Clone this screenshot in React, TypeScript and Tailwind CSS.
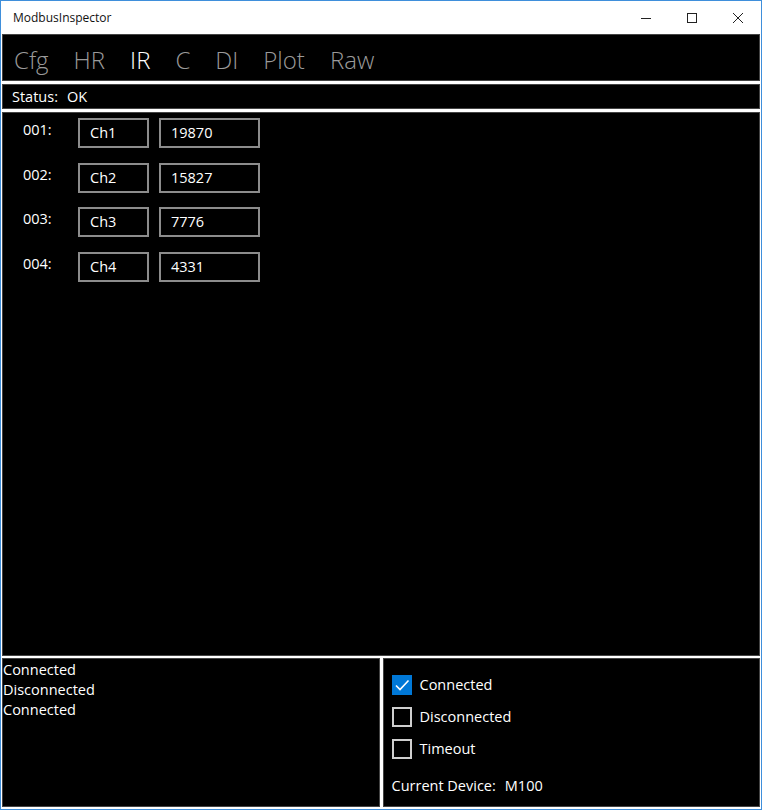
import React from "react";

const font = { fontFamily: '"Segoe UI", "Open Sans", "Noto Sans", sans-serif' };

function Box({ text, w }: { text: string; w: string }) {
  return (
    <div className={`${w} h-[30px] border-2 border-[#8c8c8c] flex items-center pl-[10px] text-[14.5px] text-white`}>
      {text}
    </div>
  );
}

function Check({ checked, label }: { checked?: boolean; label: string }) {
  return (
    <div className="flex items-center h-[20px]">
      {checked ? (
        <div className="w-[20px] h-[20px] bg-[#0078d7] flex items-center justify-center">
          <svg width="16" height="16" viewBox="0 0 16 16">
            <path d="M2 8.5 L6 12.5 L14.5 3.5" fill="none" stroke="white" strokeWidth="1.6" />
          </svg>
        </div>
      ) : (
        <div className="w-[20px] h-[20px] border-2 border-[#cfcfcf]" />
      )}
      <span className="ml-[8px] text-[14.5px] text-white">{label}</span>
    </div>
  );
}

export default function App() {
  const rows = [
    ["001:", "Ch1", "19870"],
    ["002:", "Ch2", "15827"],
    ["003:", "Ch3", "7776"],
    ["004:", "Ch4", "4331"],
  ];
  const tabs = ["Cfg", "HR", "IR", "C", "DI", "Plot", "Raw"];
  return (
    <div style={font} className="w-[762px] h-[810px] border border-[#3f8fdb] bg-white flex flex-col">
      {/* Title bar */}
      <div className="h-[33px] shrink-0 flex items-center justify-between">
        <span className="ml-[12px] text-[12px] text-[#111]">ModbusInspector</span>
        <div className="flex items-center h-full">
          <div className="w-[46px] h-full flex items-center justify-center">
            <svg width="12" height="12" viewBox="0 0 12 12"><path d="M1 6.5 H11" stroke="#222" strokeWidth="1" /></svg>
          </div>
          <div className="w-[46px] h-full flex items-center justify-center">
            <svg width="12" height="12" viewBox="0 0 12 12"><rect x="1.5" y="1.5" width="9" height="9" fill="none" stroke="#222" strokeWidth="1" /></svg>
          </div>
          <div className="w-[46px] h-full flex items-center justify-center">
            <svg width="12" height="12" viewBox="0 0 12 12"><path d="M1 1 L11 11 M11 1 L1 11" stroke="#222" strokeWidth="1" /></svg>
          </div>
        </div>
      </div>
      <div className="flex-1 flex flex-col px-[1px] pb-[2px]">
        {/* Nav */}
        <div className="h-[47px] shrink-0 bg-black border border-[#444] flex items-end pb-[3px] pl-[11px]">
          {tabs.map((t) => (
            <span
              key={t}
              className={`text-[24px] font-light mr-[25px] leading-[34px] ${t === "IR" ? "text-white" : "text-[#9a9a9a]"}`}
            >
              {t}
            </span>
          ))}
        </div>
        {/* Status */}
        <div className="h-[25px] mt-[3px] shrink-0 bg-black border border-[#444] flex items-center pt-[1px] pl-[9px] text-[14.5px] text-white">
          <span>Status:</span>
          <span className="ml-[9px]">OK</span>
        </div>
        {/* Main */}
        <div className="flex-1 mt-[3px] bg-black border border-[#444] pt-[5px] pl-[20px] flex flex-col gap-[14.5px]">
          {rows.map(([n, c, v]) => (
            <div key={n} className="flex items-start">
              <span className="w-[55px] text-[14.5px] text-white leading-[20px] pt-[2px]">{n}</span>
              <Box text={c} w="w-[71px]" />
              <div className="w-[10px]" />
              <Box text={v} w="w-[101px]" />
            </div>
          ))}
        </div>
        {/* Bottom */}
        <div className="h-[149px] mt-[2px] shrink-0 grid grid-cols-2 gap-[3px]">
          <div className="bg-black border border-[#444] text-[14.5px] text-white leading-[20px] pt-[1px]">
            <div>Connected</div>
            <div>Disconnected</div>
            <div>Connected</div>
          </div>
          <div className="bg-black border border-[#444] pl-[8px] pt-[16px] flex flex-col">
            <div className="flex flex-col gap-[12px]">
              <Check checked label="Connected" />
              <Check label="Disconnected" />
              <Check label="Timeout" />
            </div>
            <div className="mt-[16px] text-[14.5px] text-white flex">
              <span>Current Device:</span>
              <span className="ml-[9px]">M100</span>
            </div>
          </div>
        </div>
      </div>
    </div>
  );
}
